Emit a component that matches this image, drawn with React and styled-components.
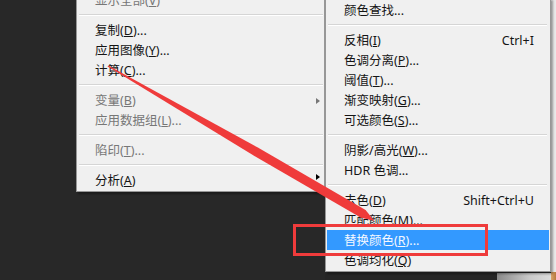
import React from "react";
import styled, { createGlobalStyle } from "styled-components";

const GlobalStyle = createGlobalStyle`
  html, body { margin: 0; padding: 0; background: #282828; }
  body {
    width: 556px; height: 280px; overflow: hidden;
    font-family: "Noto Sans", "Noto Sans CJK SC", sans-serif;
  }
`;

const Stage = styled.div`
  position: relative;
  width: 556px;
  height: 280px;
  overflow: hidden;
  background: #282828;
  display: flex;
  align-items: flex-start;
  padding-left: 76px;
  box-sizing: border-box;
`;

const Menu = styled.div`
  position: relative;
  z-index: 1;
  box-sizing: border-box;
  width: ${(p) => p.$w}px;
  margin-top: ${(p) => p.$top}px;
  background: #f0f0f0;
  border: 1px solid #979797;
  padding: 1px;
  box-shadow: 2px 2px 2px rgba(0, 0, 0, 0.35);
  display: flex;
  flex-direction: column;
`;

const RightColumn = styled.div`
  display: flex;
  flex-direction: column;
`;

const Under = styled.div`
  display: flex;
  height: 8px;
  margin-top: 1px;
`;

const UnderDark = styled.div`
  flex: 1;
  background: #262626;
`;

const UnderGrey = styled.div`
  width: 54px;
  background: linear-gradient(90deg, #8a8a8a, #c9c9c9 60%, #dcdcdc);
`;

const RightEdge = styled.div`
  flex: 1;
  height: 280px;
  display: flex;
  flex-direction: column;
`;

const EdgeLight = styled.div`
  height: 272px;
  background: #e9e9e9;
`;

const EdgeWood = styled.div`
  flex: 1;
  background: linear-gradient(90deg, #d9a46c, #b8793f);
`;

const Row = styled.div`
  height: 20px;
  box-sizing: border-box;
  padding: 2px ${(p) => p.$pr}px 0 17px;
  display: flex;
  align-items: center;
  font-size: 12.5px;
  line-height: 18px;
  white-space: nowrap;
  color: ${(p) => (p.$disabled ? "#777777" : p.$active ? "#f4f8ff" : "#151515")};
  background: ${(p) => (p.$active ? "#3399ff" : "transparent")};
`;

const Label = styled.span`
  flex: 1;
`;

const Key = styled.span`
  text-decoration: underline;
  text-underline-offset: 1px;
`;

const Shortcut = styled.span`
  font-size: 12.5px;
`;

const SubArrow = styled.span`
  width: 0;
  height: 0;
  border-left: 4px solid ${(p) => (p.$disabled ? "#777777" : "#000")};
  border-top: 3.5px solid transparent;
  border-bottom: 3.5px solid transparent;
  transform: translateY(${(p) => p.$lift}px);
`;

const Sep = styled.div`
  height: 10px;
  box-sizing: border-box;
  padding: 4px ${(p) => p.$pr}px 0 1px;
  display: flex;
  align-items: flex-start;
  &::before {
    content: "";
    flex: 1;
    height: 1px;
    background: #d5d5d5;
    border-bottom: 1px solid #ffffff;
  }
`;

const Overlay = styled.svg`
  position: absolute;
  left: 0;
  top: 0;
  z-index: 5;
  pointer-events: none;
`;

const MarkBox = styled.div`
  position: absolute;
  left: 293px;
  top: 224px;
  width: 195px;
  height: 32px;
  box-sizing: border-box;
  border: 3px solid #ef3b3b;
  z-index: 4;
`;

const leftItems = [
  { label: "显示全部", k: "V", disabled: true },
  { sep: true },
  { label: "复制", k: "D", tail: "..." },
  { label: "应用图像", k: "Y", tail: "..." },
  { label: "计算", k: "C", tail: "..." },
  { sep: true },
  { label: "变量", k: "B", disabled: true, sub: true, lift: 0 },
  { label: "应用数据组", k: "L", tail: "...", disabled: true },
  { sep: true },
  { label: "陷印", k: "T", tail: "...", disabled: true },
  { sep: true },
  { label: "分析", k: "A", sub: true, lift: -4 },
];

const rightItems = [
  { label: "颜色查找..." },
  { sep: true },
  { label: "反相", k: "I", shortcut: "Ctrl+I" },
  { label: "色调分离", k: "P", tail: "..." },
  { label: "阈值", k: "T", tail: "..." },
  { label: "渐变映射", k: "G", tail: "..." },
  { label: "可选颜色", k: "S", tail: "..." },
  { sep: true },
  { label: "阴影/高光", k: "W", tail: "..." },
  { label: "HDR 色调..." },
  { sep: true },
  { label: "去色", k: "D", shortcut: "Shift+Ctrl+U" },
  { label: "匹配颜色", k: "M", tail: "..." },
  { label: "替换颜色", k: "R", tail: "...", active: true },
  { label: "色调均化", k: "Q" },
];

function MenuItems({ items, pr, sepPr }) {
  return items.map((it, i) =>
    it.sep ? (
      <Sep key={i} $pr={sepPr} />
    ) : (
      <Row key={i} $pr={pr} $disabled={it.disabled} $active={it.active}>
        <Label>
          {it.label}
          {it.k && (
            <>
              (<Key>{it.k}</Key>)
            </>
          )}
          {it.tail}
        </Label>
        {it.shortcut && <Shortcut>{it.shortcut}</Shortcut>}
        {it.sub && <SubArrow $disabled={it.disabled} $lift={it.lift} />}
      </Row>
    )
  );
}

export default function App() {
  return (
    <>
      <GlobalStyle />
      <Stage>
        <Menu $w={249} $top={-12}>
          <MenuItems items={leftItems} pr={3} sepPr={0} />
        </Menu>
        <RightColumn>
          <Menu $w={226} $top={-2}>
            <MenuItems items={rightItems} pr={15} sepPr={2} />
          </Menu>
          <Under>
            <UnderDark />
            <UnderGrey />
          </Under>
        </RightColumn>
        <RightEdge>
          <EdgeLight />
          <EdgeWood />
        </RightEdge>
        <MarkBox />
        <Overlay width="556" height="280" viewBox="0 0 556 280">
          <polygon
            fill="#ef3b3b"
            points="108.25,65.57 257.4,147.3 365.6,209.9 374,220.5 361,217.7 252.8,155.1 107.75,66.43"
          />
          <polygon
            fill="#ef3b3b"
            points="285.2,171.6 365,212.8 374,220.8 362.6,217.4 284.8,172.4"
          />
        </Overlay>
      </Stage>
    </>
  );
}
